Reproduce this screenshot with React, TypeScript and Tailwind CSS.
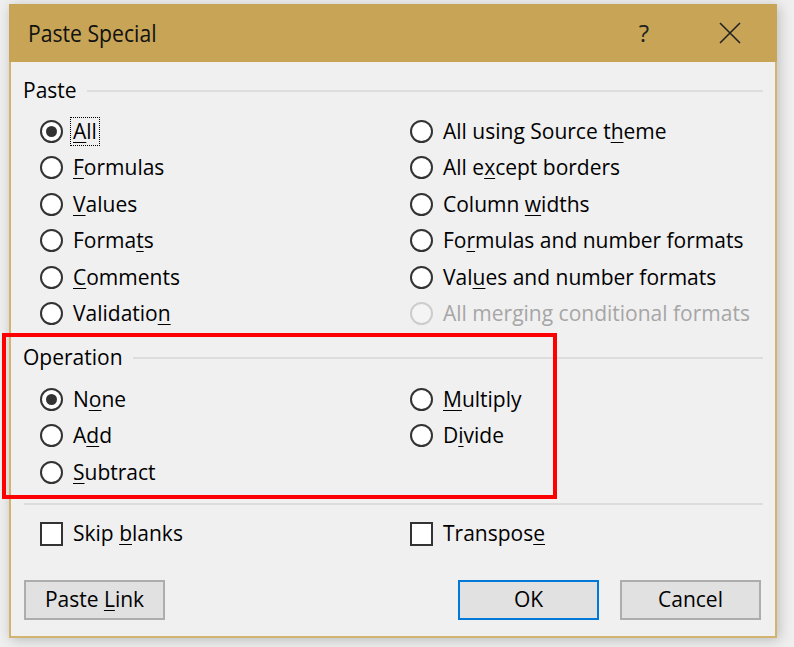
import type { ReactNode } from 'react';

function Key({ pre = '', k, post = '' }: { pre?: string; k: string; post?: string }) {
  return (
    <span>
      {pre}
      <span className="underline decoration-1 underline-offset-[3px]">{k}</span>
      {post}
    </span>
  );
}

function Radio({ checked, disabled }: { checked?: boolean; disabled?: boolean }) {
  return (
    <span
      className={
        disabled
          ? 'flex h-[23px] w-[23px] shrink-0 items-center justify-center rounded-full border-2 border-[#cdcdcd] bg-[#f4f4f4]'
          : 'flex h-[23px] w-[23px] shrink-0 items-center justify-center rounded-full border-2 border-[#333333] bg-white'
      }
    >
      {checked && <span className="h-[11px] w-[11px] rounded-full bg-[#333333]" />}
    </span>
  );
}

function Option({ children, checked, disabled }: { children: ReactNode; checked?: boolean; disabled?: boolean }) {
  return (
    <div className="flex h-[36.5px] items-center gap-[10px]">
      <Radio checked={checked} disabled={disabled} />
      <span className={disabled ? 'text-[#a6a6a6]' : 'text-black'}>{children}</span>
    </div>
  );
}

function Check({ children }: { children: ReactNode }) {
  return (
    <div className="flex h-[36.5px] items-center gap-[10px]">
      <span className="h-[24px] w-[23px] shrink-0 border-2 border-[#333333] bg-white" />
      <span>{children}</span>
    </div>
  );
}

function GroupHeader({ label }: { label: string }) {
  return (
    <div className="flex h-[24px] items-center">
      <span>{label}</span>
      <div className="ml-[10px] h-[2px] flex-1 bg-[#dddddd]" />
    </div>
  );
}

function DlgButton({ children, primary }: { children: ReactNode; primary?: boolean }) {
  return (
    <button
      className={
        primary
          ? 'flex h-[40px] w-[141px] items-center justify-center border-2 border-[#0078d7] bg-[#e1e1e1]'
          : 'flex h-[40px] w-[141px] items-center justify-center border-2 border-[#adadad] bg-[#e1e1e1]'
      }
    >
      {children}
    </button>
  );
}

export default function App() {
  return (
    <div className="relative h-[647px] w-[794px] overflow-hidden bg-[#efefef] pl-[9px] pt-[4px] font-['Open_Sans',sans-serif] text-[21px] font-medium text-black">
      <div className="flex h-[634px] w-[768px] flex-col border-2 border-t-0 border-[#d2b36f] bg-[#f0f0f0] shadow-[2px_2px_12px_rgba(0,0,0,0.22)]">
        {/* title bar */}
        <div className="-mx-[2px] flex h-[58px] shrink-0 items-center bg-[#c8a456] pl-[19px] pr-[36px]">
          <span className="inline-block origin-left scale-x-[0.92] text-[23px] font-normal leading-none text-[#111]">Paste Special</span>
          <span className="ml-auto mr-[70px] text-[24px] font-normal leading-none text-[#222]">?</span>
          <svg width="22" height="22" viewBox="0 0 22 22" className="text-[#222]">
            <path d="M1 1 L21 21 M21 1 L1 21" stroke="currentColor" strokeWidth="1.6" fill="none" />
          </svg>
        </div>

        {/* body */}
        <div className="flex flex-1 flex-col px-[12px]">
          <div className="mt-[17px]">
            <GroupHeader label="Paste" />
          </div>
          <div className="mt-[10px] grid grid-cols-[370px_1fr] pl-[17px]">
            <div>
              <Option checked>
                <span className="-mx-[3px] inline-block border border-dotted border-black px-[2px] leading-[27px]">
                  <Key k="A" post="ll" />
                </span>
              </Option>
              <Option><Key k="F" post="ormulas" /></Option>
              <Option><Key k="V" post="alues" /></Option>
              <Option><Key pre="Forma" k="t" post="s" /></Option>
              <Option><Key k="C" post="omments" /></Option>
              <Option><Key pre="Validatio" k="n" /></Option>
            </div>
            <div>
              <Option><Key pre="All using Source t" k="h" post="eme" /></Option>
              <Option><Key pre="All e" k="x" post="cept borders" /></Option>
              <Option><Key pre="Column " k="w" post="idths" /></Option>
              <Option><Key pre="Fo" k="r" post="mulas and number formats" /></Option>
              <Option><Key pre="Val" k="u" post="es and number formats" /></Option>
              <Option disabled>All merging conditional formats</Option>
            </div>
          </div>

          <div className="mt-[14px]">
            <GroupHeader label="Operation" />
          </div>
          <div className="mt-[11px] grid grid-cols-[370px_1fr] pl-[17px]">
            <div>
              <Option checked><Key pre="N" k="o" post="ne" /></Option>
              <Option><Key pre="A" k="d" post="d" /></Option>
              <Option><Key k="S" post="ubtract" /></Option>
            </div>
            <div>
              <Option><Key k="M" post="ultiply" /></Option>
              <Option><Key pre="D" k="i" post="vide" /></Option>
            </div>
          </div>

          <div className="mt-[12px] ml-[1px] h-[2px] bg-[#dddddd]" />

          <div className="mt-[11px] grid grid-cols-[370px_1fr] pl-[17px]">
            <Check><Key pre="Skip " k="b" post="lanks" /></Check>
            <Check><Key pre="Transpos" k="e" /></Check>
          </div>

          <div className="mt-[28px] flex items-center pl-[1px] pr-[2px]">
            <DlgButton><Key pre="Paste " k="L" post="ink" /></DlgButton>
            <div className="ml-auto flex gap-[21px]">
              <DlgButton primary>OK</DlgButton>
              <DlgButton>Cancel</DlgButton>
            </div>
          </div>
        </div>
      </div>

      {/* red highlight annotation */}
      <div className="absolute left-[2px] top-[333px] h-[166px] w-[555px] border-4 border-[#ff0000]" />
    </div>
  );
}
